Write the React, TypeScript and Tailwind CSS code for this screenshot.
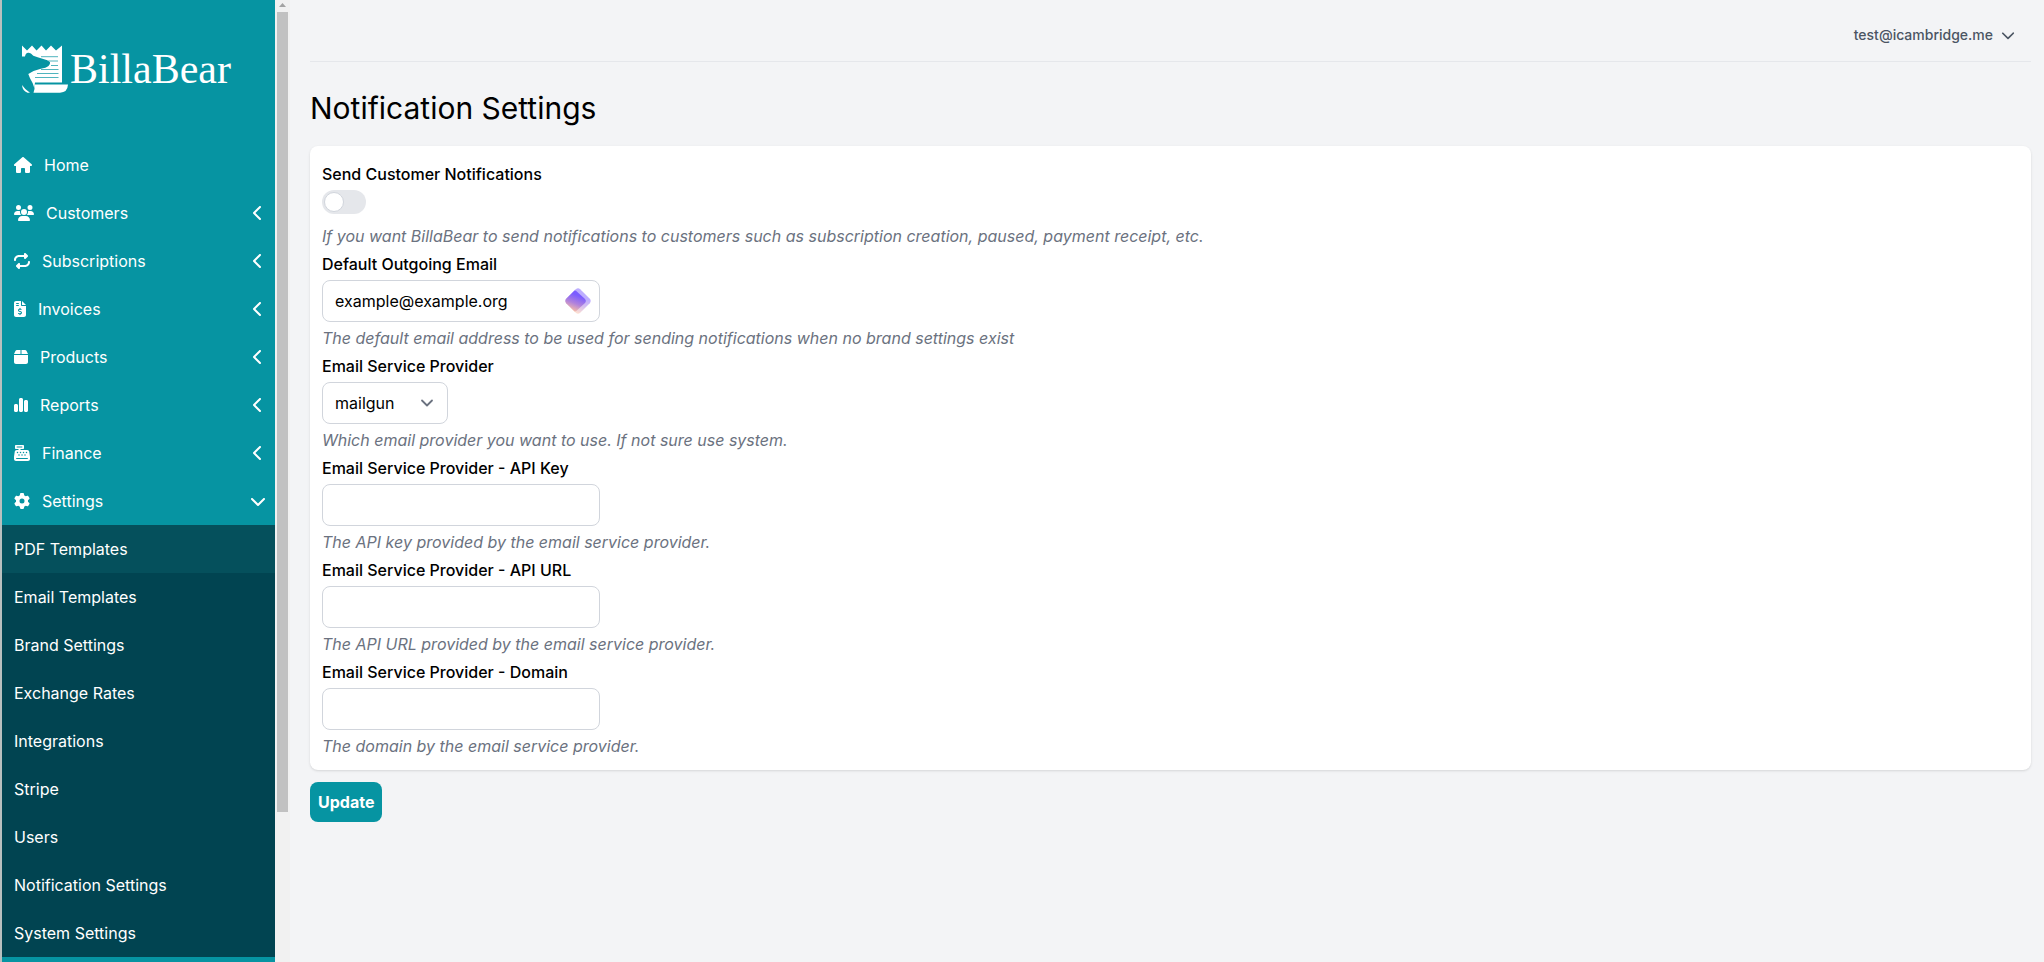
import React from "react";
import {
  FaHouse, FaUsers, FaRepeat, FaFileInvoiceDollar, FaBox, FaChartSimple,
  FaCashRegister, FaGear, FaChevronLeft, FaChevronDown,
} from "react-icons/fa6";

const navItems = [
  { label: "Home", icon: FaHouse, width: "w-[18px]", open: false, leaf: true },
  { label: "Customers", icon: FaUsers, width: "w-5", open: false },
  { label: "Subscriptions", icon: FaRepeat, width: "w-4", open: false },
  { label: "Invoices", icon: FaFileInvoiceDollar, width: "w-3", open: false },
  { label: "Products", icon: FaBox, width: "w-[14px]", open: false },
  { label: "Reports", icon: FaChartSimple, width: "w-[14px]", open: false },
  { label: "Finance", icon: FaCashRegister, width: "w-4", open: false },
  { label: "Settings", icon: FaGear, width: "w-4", open: true },
];

const settingsItems = [
  "PDF Templates", "Email Templates", "Brand Settings", "Exchange Rates", "Integrations",
  "Stripe", "Users", "Notification Settings", "System Settings",
];

function Logo() {
  return (
    <a href="#" aria-label="BillaBear" className="flex h-[141px] items-start pl-5 pt-[45px] text-white">
      <svg viewBox="0 0 46 48" className="h-12 w-[46px] shrink-0" fill="currentColor" aria-hidden="true">
        <path d="M0 0.5 L5 5.5 L10 0.5 L14.5 5.5 L19.5 0.5 L24 5.5 L29 0.5 L34 5.5 L40 0.5 V37.5 H13 L12.300 43 L10.700 38.300 L8 33.300 L6.300 29 Q11 25.500 18 24 Q24.500 22.800 26.500 21 Q28.500 19 28 17.300 Q26 15 21.300 14 Q15 12 11.300 10.700 Q8.500 7.300 6.300 7.700 Q3.500 8 3 11.500 H0 Z" />
        <path d="M12.500 39.500 H46 Q45.500 47.500 38 47.700 H11.500 Q13 44 12.500 39.500 Z" />
        <path d="M0 40 Q2.500 44 8 47.700 H5.500 Q0.500 46 0 40 Z" />
        <path d="M19 11.700 H36 M26 16 H36 M29 20.500 H36 M19 24.500 H36.500 M15 28.500 H36.500 M13 32.500 H36.500" stroke="#0694a2" strokeOpacity="0.7" strokeWidth="1" fill="none" />
      </svg>
      <span className="ml-0.5 font-['Liberation_Serif',serif] text-[42px] leading-[48px]">BillaBear</span>
    </a>
  );
}

function Sidebar() {
  return (
    <aside className="flex w-[275px] shrink-0 flex-col overflow-hidden border-l-2 border-[#b8c0bf] bg-[#0694a2] text-white">
      <Logo />
      <nav aria-label="Main">
        <ul>
          {navItems.map(({ label, icon: Icon, width, open, leaf }) => (
            <li key={label}>
              <a href="#" className="flex h-12 items-center gap-3 pl-3 pr-[9px]">
                <Icon className={`h-4 shrink-0 ${width}`} />
                <span className="grow">{label}</span>
                {!leaf && (open ? <FaChevronDown className="size-4" /> : <FaChevronLeft className="size-4" />)}
              </a>
            </li>
          ))}
        </ul>
        <ul className="bg-[#014451]">
          {settingsItems.map((label, i) => (
            <li key={label}>
              <a href="#" className={`flex h-12 items-center px-3 ${i === 0 ? "bg-[#05505c]" : ""}`}>{label}</a>
            </li>
          ))}
        </ul>
      </nav>
    </aside>
  );
}

function ScrollTrack() {
  return (
    <div aria-hidden="true" className="flex w-[15px] shrink-0 flex-col items-center bg-[#f1f1f1]">
      <svg viewBox="0 0 15 12" className="h-3 w-[15px] shrink-0">
        <path d="M4 7 L7.500 3 L11 7 Z" fill="#a3a3a3" />
      </svg>
      <div className="h-[800px] w-[11px] bg-[#c1c1c1]" />
    </div>
  );
}

const controlClass = "h-[42px] rounded-lg border border-gray-300 bg-white px-3 text-base text-black";

function Field({ id, label, help, children, helpGap = "mt-1" }: {
  id: string; label: string; help: string; children: React.ReactNode; helpGap?: string;
}) {
  return (
    <div className="flex flex-col items-start pt-1">
      <label htmlFor={id} className="mb-1 font-medium">{label}</label>
      {children}
      <p id={`${id}-help`} className={`${helpGap} italic text-[#6b7280]`}>{help}</p>
    </div>
  );
}

function TextField({ id, label, help }: { id: string; label: string; help: string }) {
  return (
    <Field id={id} label={label} help={help}>
      <input id={id} type="text" aria-describedby={`${id}-help`} className={`${controlClass} w-[278px]`} />
    </Field>
  );
}

function DiamondBadge() {
  return (
    <svg viewBox="0 0 26 26" className="pointer-events-none absolute right-[9px] top-2 size-[26px]" aria-hidden="true">
      <defs>
        <linearGradient id="diamond" gradientUnits="userSpaceOnUse" x1="16" y1="4" x2="8" y2="24">
          <stop offset="0.2" stopColor="#7b5cff" />
          <stop offset="0.6" stopColor="#b183dc" />
          <stop offset="1" stopColor="#ffc4a0" />
        </linearGradient>
      </defs>
      <path d="M10.800 1.200 Q13 -0.600 15.200 1.200 L24.800 10.800 Q26.600 13 24.800 15.200 L15.200 24.800 Q13 26.600 10.800 24.800 L1.200 15.200 Q-0.600 13 1.200 10.800 Z" fill="url(#diamond)" opacity="0.5" />
      <path d="M9.500 2.500 L11 2.800 L20 11 Q21.600 13 20 15 L11 23.200 L9.500 23.500 L1.200 15.200 Q-0.600 13 1.200 10.800 Z" fill="url(#diamond)" />
    </svg>
  );
}

export default function App() {
  return (
    <div className="flex h-screen overflow-hidden bg-[#f3f4f6] font-['Inter',sans-serif] text-base text-black">
      <Sidebar />
      <ScrollTrack />
      <main className="min-w-0 grow pl-5 pr-[13px]">
        <header className="flex h-[62px] items-center justify-end border-b border-gray-200 pr-4 pt-2">
          <button type="button" className="flex items-center gap-2 text-sm font-medium text-[#4b5563]">
            test@icambridge.me
            <FaChevronDown className="size-[14px]" />
          </button>
        </header>
        <h1 className="mt-7 text-3xl leading-9">Notification Settings</h1>
        <form onSubmit={(e) => e.preventDefault()}>
          <section className="mt-5 rounded-lg bg-white p-3 shadow-sm">
            <Field id="send" label="Send Customer Notifications" helpGap="mt-[10px]"
              help="If you want BillaBear to send notifications to customers such as subscription creation, paused, payment receipt, etc.">
              <input id="send" type="checkbox" role="switch"
                className="h-6 w-11 appearance-none rounded-full bg-[#e5e7eb] p-[2px] before:block before:size-5 before:rounded-full before:border before:border-gray-300 before:bg-white checked:bg-[#0694a2] checked:before:ml-5" />
            </Field>
            <Field id="email" label="Default Outgoing Email"
              help="The default email address to be used for sending notifications when no brand settings exist">
              <div className="relative">
                <input id="email" type="email" defaultValue="example@example.org" className={`${controlClass} block w-[278px] pr-10`} />
                <DiamondBadge />
              </div>
            </Field>
            <Field id="provider" label="Email Service Provider" help="Which email provider you want to use. If not sure use system.">
              <div className="relative">
                <select id="provider" defaultValue="mailgun" className={`${controlClass} block w-[126px] appearance-none`}>
                  <option>mailgun</option>
                  <option>system</option>
                </select>
                <svg viewBox="0 0 20 20" className="pointer-events-none absolute right-[11px] top-[11px] size-5" fill="none" stroke="#6b7280" strokeWidth="1.8" strokeLinecap="round" strokeLinejoin="round" aria-hidden="true">
                  <path d="M5 7.500 L10 12.500 L15 7.500" />
                </svg>
              </div>
            </Field>
            <TextField id="key" label="Email Service Provider - API Key" help="The API key provided by the email service provider." />
            <TextField id="url" label="Email Service Provider - API URL" help="The API URL provided by the email service provider." />
            <TextField id="domain" label="Email Service Provider - Domain" help="The domain by the email service provider." />
          </section>
          <button type="submit" className="mt-3 rounded-lg bg-[#0694a2] p-2 font-bold text-white">Update</button>
        </form>
      </main>
    </div>
  );
}
